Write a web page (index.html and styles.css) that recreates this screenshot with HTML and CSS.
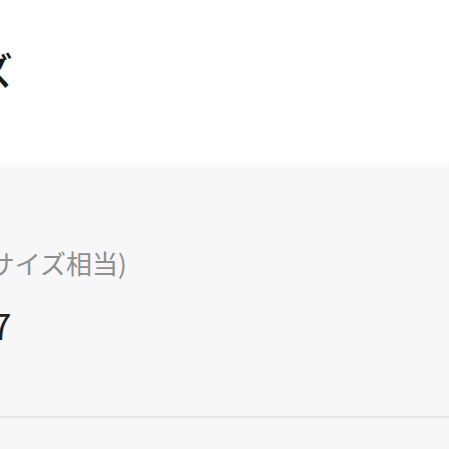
FILE: index.html
```html
<!DOCTYPE html>
<html lang="ja">
<head>
    <meta charset="UTF-8">
    <meta name="viewport" content="width=device-width, initial-scale=1.0">
    <title>靴のサイズ</title>
    <link rel="stylesheet" href="styles.css">
</head>
<body>
    <div class="page">
        <header class="page-header">
            <h1>靴のサイズ</h1>
        </header>

        <section class="size-panel">
            <div class="size-row">
                <div class="size-label">(ヨーロッパ式サイズ相当)</div>
                <div class="size-value">UK 6 / US 7</div>
            </div>
        </section>
    </div>
</body>
</html>
```

FILE: styles.css
```css
html, body {
    margin: 0;
    padding: 0;
    overflow: hidden;
}
body {
    font-family: "Noto Sans CJK JP", "Noto Sans", sans-serif;
    background-color: #f7f7f7;
    color: #222;
}
.page {
    margin-left: -176px;
}
.page-header {
    background-color: #fff;
    padding: 50px 0 0;
    height: 108px;
}
.page-header h1 {
    margin: 0;
    font-size: 38px;
    line-height: 1;
    font-weight: 500;
    color: #1a1a1a;
}
.size-panel {
    background: linear-gradient(#fff, #f7f7f7 12px);
}
.size-row {
    padding: 92px 0 0;
    height: 166px;
    border-bottom: 2px solid #e6e6e6;
}
.size-label {
    font-size: 26px;
    line-height: 1;
    color: #8e8e8e;
}
.size-value {
    margin-top: 30px;
    font-size: 36px;
    line-height: 1;
    letter-spacing: 0.5px;
    color: #222;
}
```
